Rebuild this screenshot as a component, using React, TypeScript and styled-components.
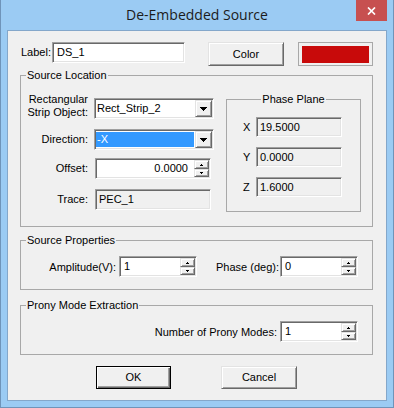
import React from 'react'
import styled, { createGlobalStyle, css } from 'styled-components'

const GlobalStyle = createGlobalStyle`
  html, body {
    margin: 0;
    padding: 0;
    background: #ffffff;
  }
  body {
    font-family: 'Liberation Sans', Arial, sans-serif;
    font-size: 11px;
    color: #000;
  }
  * {
    box-sizing: border-box;
  }
`

// classic 3d edges
const sunken = css`
  border-style: solid;
  border-width: 1px;
  border-color: #a0a0a0 #ffffff #ffffff #a0a0a0;
  box-shadow: inset 1px 1px 0 #696969, inset -1px -1px 0 #e3e3e3;
`

const raised = css`
  border-style: solid;
  border-width: 1px;
  border-color: #e3e3e3 #696969 #696969 #e3e3e3;
  box-shadow: inset 1px 1px 0 #ffffff, inset -1px -1px 0 #a0a0a0;
  background: #f0f0f0;
`

const Window = styled.div`
  width: 394px;
  height: 408px;
  background: #9bcbf3;
  border: 1px solid #6f94b9;
  border-top: none;
  display: flex;
  flex-direction: column;
`

const TitleBar = styled.div`
  height: 30px;
  flex: none;
  display: grid;
  grid-template-columns: 1fr auto 1fr;
`

const Title = styled.div`
  grid-column: 2;
  font-family: 'Open Sans', 'Noto Sans', sans-serif;
  font-size: 14px;
  line-height: 30px;
  color: #1b1b1b;
  white-space: nowrap;
`

const CloseButton = styled.div`
  grid-column: 3;
  justify-self: end;
  align-self: start;
  width: 31px;
  height: 21px;
  margin-right: 6px;
  background: #c75050;
  display: flex;
  align-items: center;
  justify-content: center;
`

const Client = styled.div`
  margin: 0 6px;
  height: 371px;
  flex: none;
  border: 1px solid #84a7ca;
  background: #f0f0f0;
  padding: 11px 13px 0 12px;
  display: flex;
  flex-direction: column;
`

const TopRow = styled.div`
  display: flex;
  align-items: flex-start;
  height: 24px;
`

const RowLabel = styled.label`
  width: 31px;
  margin-left: 1px;
  line-height: 21px;
`

const TextBox = styled.div<{ $w: number }>`
  ${sunken}
  width: ${p => p.$w}px;
  height: 21px;
  background: #ffffff;
  padding: 0 4px;
  line-height: 19px;
`

const PushButton = styled.div<{ $w: number; $h: number; $default?: boolean }>`
  ${raised}
  width: ${p => p.$w}px;
  height: ${p => p.$h}px;
  line-height: ${p => p.$h - 2}px;
  text-align: center;
  ${p =>
    p.$default &&
    css`
      border-color: #000;
      box-shadow: inset 1px 1px 0 #ffffff, inset -1px -1px 0 #696969,
        inset -2px -2px 0 #a0a0a0;
    `}
`

const ColorSwatch = styled.div`
  width: 75px;
  height: 24px;
  margin-left: 14px;
  border: 1px solid #a8a8a8;
  padding: 3px 3px 2px 3px;
`

const SwatchFill = styled.div`
  height: 100%;
  background: #c80a0a;
`

const Group = styled.fieldset<{ $w: number; $mt: number; $pt: number; $pb: number }>`
  width: ${p => p.$w}px;
  margin: ${p => p.$mt}px 0 0 0;
  padding: ${p => p.$pt}px 0 ${p => p.$pb}px 0;
  border: 1px solid #a8a8a8;
  min-inline-size: 0;
  flex: none;
`

const GroupTitle = styled.legend<{ $center?: boolean }>`
  padding: 0 1px;
  margin-left: ${p => (p.$center ? 'auto' : '5px')};
  margin-right: ${p => (p.$center ? 'auto' : '0')};
  line-height: 13px;
  font-size: 11px;
`

const LocationBody = styled.div`
  display: flex;
  align-items: flex-start;
  padding-left: 6px;
`

const FieldColumn = styled.div`
  display: flex;
  flex-direction: column;
  width: 187px;
`

const FieldRow = styled.div<{ $mt: number; $end?: boolean }>`
  display: grid;
  grid-template-columns: 61px auto;
  column-gap: 6px;
  align-items: ${p => (p.$end ? 'end' : 'center')};
  margin-top: ${p => p.$mt}px;
`

const FieldLabel = styled.div`
  text-align: right;
  line-height: 13px;
`

const ComboBox = styled.div<{ $w: number }>`
  ${sunken}
  width: ${p => p.$w}px;
  height: 21px;
  background: #ffffff;
  padding: 1px;
  display: flex;
`

const ComboValue = styled.div<{ $selected?: boolean }>`
  flex: 1;
  margin: 1px 1px 1px 0;
  padding-left: 1px;
  line-height: 15px;
  background: ${p => (p.$selected ? '#3399ff' : 'transparent')};
  color: ${p => (p.$selected ? '#ffffff' : '#000000')};
`

const DropButton = styled.div`
  ${raised}
  width: 17px;
  display: flex;
  align-items: center;
  justify-content: center;
`

const ReadOnlyBox = styled.div<{ $w: number; $h: number; $ml?: number }>`
  ${sunken}
  width: ${p => p.$w}px;
  height: ${p => p.$h}px;
  margin-left: ${p => p.$ml ?? 0}px;
  background: #f0f0f0;
  padding-left: 3px;
  line-height: ${p => p.$h - 2}px;
`

const SpinBox = styled.div<{ $w: number; $ml?: number }>`
  ${sunken}
  width: ${p => p.$w}px;
  height: 21px;
  margin-left: ${p => p.$ml ?? 0}px;
  background: #ffffff;
  display: flex;
`

const SpinValue = styled.div<{ $right?: boolean }>`
  flex: 1;
  line-height: 19px;
  text-align: ${p => (p.$right ? 'right' : 'left')};
  padding: ${p => (p.$right ? '0 5px 0 0' : '0 0 0 4px')};
`

const SpinButtons = styled.div`
  width: 15px;
  margin: 1px;
  display: grid;
  grid-template-rows: 9px 8px;
`

const SpinButton = styled.div`
  ${raised}
  display: flex;
  align-items: center;
  justify-content: center;
`

const PhaseGrid = styled.div`
  display: grid;
  grid-template-columns: 13px 86px;
  grid-auto-rows: 20px;
  row-gap: 10px;
  align-items: center;
  padding-left: 16px;
`

const AxisLabel = styled.div`
  line-height: 13px;
`

const PropsGrid = styled.div<{ $cols: string }>`
  display: grid;
  grid-template-columns: ${p => p.$cols};
  align-items: center;
`

const PropLabel = styled.div<{ $pr: number }>`
  text-align: right;
  padding-right: ${p => p.$pr}px;
  white-space: nowrap;
`

const ButtonRow = styled.div`
  display: flex;
  gap: 50px;
  margin-top: 11px;
  padding-left: 76px;
`

const DownArrow = () => (
  <svg width="7" height="4" viewBox="0 0 7 4" shapeRendering="crispEdges">
    <rect x="0" y="0" width="7" height="1" fill="#000" />
    <rect x="1" y="1" width="5" height="1" fill="#000" />
    <rect x="2" y="2" width="3" height="1" fill="#000" />
    <rect x="3" y="3" width="1" height="1" fill="#000" />
  </svg>
)

const SpinUp = () => (
  <svg width="3" height="2" viewBox="0 0 3 2" shapeRendering="crispEdges">
    <rect x="1" y="0" width="1" height="1" fill="#000" />
    <rect x="0" y="1" width="3" height="1" fill="#000" />
  </svg>
)

const SpinDown = () => (
  <svg width="3" height="2" viewBox="0 0 3 2" shapeRendering="crispEdges">
    <rect x="0" y="0" width="3" height="1" fill="#000" />
    <rect x="1" y="1" width="1" height="1" fill="#000" />
  </svg>
)

const CloseGlyph = () => (
  <svg width="9" height="8" viewBox="0 0 9 8">
    <path d="M1 0.5 L8 7.5 M8 0.5 L1 7.5" stroke="#fff" strokeWidth="1.7" />
  </svg>
)

const Spinner = ({ value, width, ml, right }: { value: string; width: number; ml?: number; right?: boolean }) => (
  <SpinBox $w={width} $ml={ml}>
    <SpinValue $right={right}>{value}</SpinValue>
    <SpinButtons>
      <SpinButton>
        <SpinUp />
      </SpinButton>
      <SpinButton>
        <SpinDown />
      </SpinButton>
    </SpinButtons>
  </SpinBox>
)

const Combo = ({ value, selected }: { value: string; selected?: boolean }) => (
  <ComboBox $w={120}>
    <ComboValue $selected={selected}>{value}</ComboValue>
    <DropButton>
      <DownArrow />
    </DropButton>
  </ComboBox>
)

export default function App() {
  return (
    <>
      <GlobalStyle />
      <Window>
        <TitleBar>
          <Title>De-Embedded Source</Title>
          <CloseButton>
            <CloseGlyph />
          </CloseButton>
        </TitleBar>
        <Client>
          <TopRow>
            <RowLabel>Label:</RowLabel>
            <TextBox $w={133}>DS_1</TextBox>
            <PushButton $w={76} $h={24} style={{ marginLeft: 23 }}>
              Color
            </PushButton>
            <ColorSwatch>
              <SwatchFill />
            </ColorSwatch>
          </TopRow>

          <Group $w={353} $mt={3} $pt={11} $pb={14}>
            <GroupTitle>Source Location</GroupTitle>
            <LocationBody>
              <FieldColumn>
                <FieldRow $mt={0} $end>
                  <FieldLabel>
                    Rectangular
                    <br />
                    Strip Object:
                  </FieldLabel>
                  <Combo value="Rect_Strip_2" />
                </FieldRow>
                <FieldRow $mt={10}>
                  <FieldLabel>Direction:</FieldLabel>
                  <Combo value="-X" selected />
                </FieldRow>
                <FieldRow $mt={8}>
                  <FieldLabel>Offset:</FieldLabel>
                  <Spinner value="0.0000" width={116} ml={1} right />
                </FieldRow>
                <FieldRow $mt={10}>
                  <FieldLabel>Trace:</FieldLabel>
                  <ReadOnlyBox $w={116} $h={21} $ml={1}>
                    PEC_1
                  </ReadOnlyBox>
                </FieldRow>
              </FieldColumn>

              <Group $w={135} $mt={0} $pt={11} $pb={14} style={{ marginLeft: 12 }}>
                <GroupTitle $center>Phase Plane</GroupTitle>
                <PhaseGrid>
                  <AxisLabel>X</AxisLabel>
                  <ReadOnlyBox $w={86} $h={20}>
                    19.5000
                  </ReadOnlyBox>
                  <AxisLabel>Y</AxisLabel>
                  <ReadOnlyBox $w={86} $h={20}>
                    0.0000
                  </ReadOnlyBox>
                  <AxisLabel>Z</AxisLabel>
                  <ReadOnlyBox $w={86} $h={20}>
                    1.6000
                  </ReadOnlyBox>
                </PhaseGrid>
              </Group>
            </LocationBody>
          </Group>

          <Group $w={353} $mt={7} $pt={9} $pb={12}>
            <GroupTitle>Source Properties</GroupTitle>
            <PropsGrid $cols="98px 78px 83px 78px">
              <PropLabel $pr={3}>Amplitude(V):</PropLabel>
              <Spinner value="1" width={78} />
              <PropLabel $pr={1}>Phase (deg):</PropLabel>
              <Spinner value="0" width={78} />
            </PropsGrid>
          </Group>

          <Group $w={353} $mt={9} $pt={9} $pb={12}>
            <GroupTitle>Prony Mode Extraction</GroupTitle>
            <PropsGrid $cols="259px 78px">
              <PropLabel $pr={3}>Number of Prony Modes:</PropLabel>
              <Spinner value="1" width={78} />
            </PropsGrid>
          </Group>

          <ButtonRow>
            <PushButton $w={75} $h={23} $default>
              OK
            </PushButton>
            <PushButton $w={76} $h={23}>
              Cancel
            </PushButton>
          </ButtonRow>
        </Client>
      </Window>
    </>
  )
}
